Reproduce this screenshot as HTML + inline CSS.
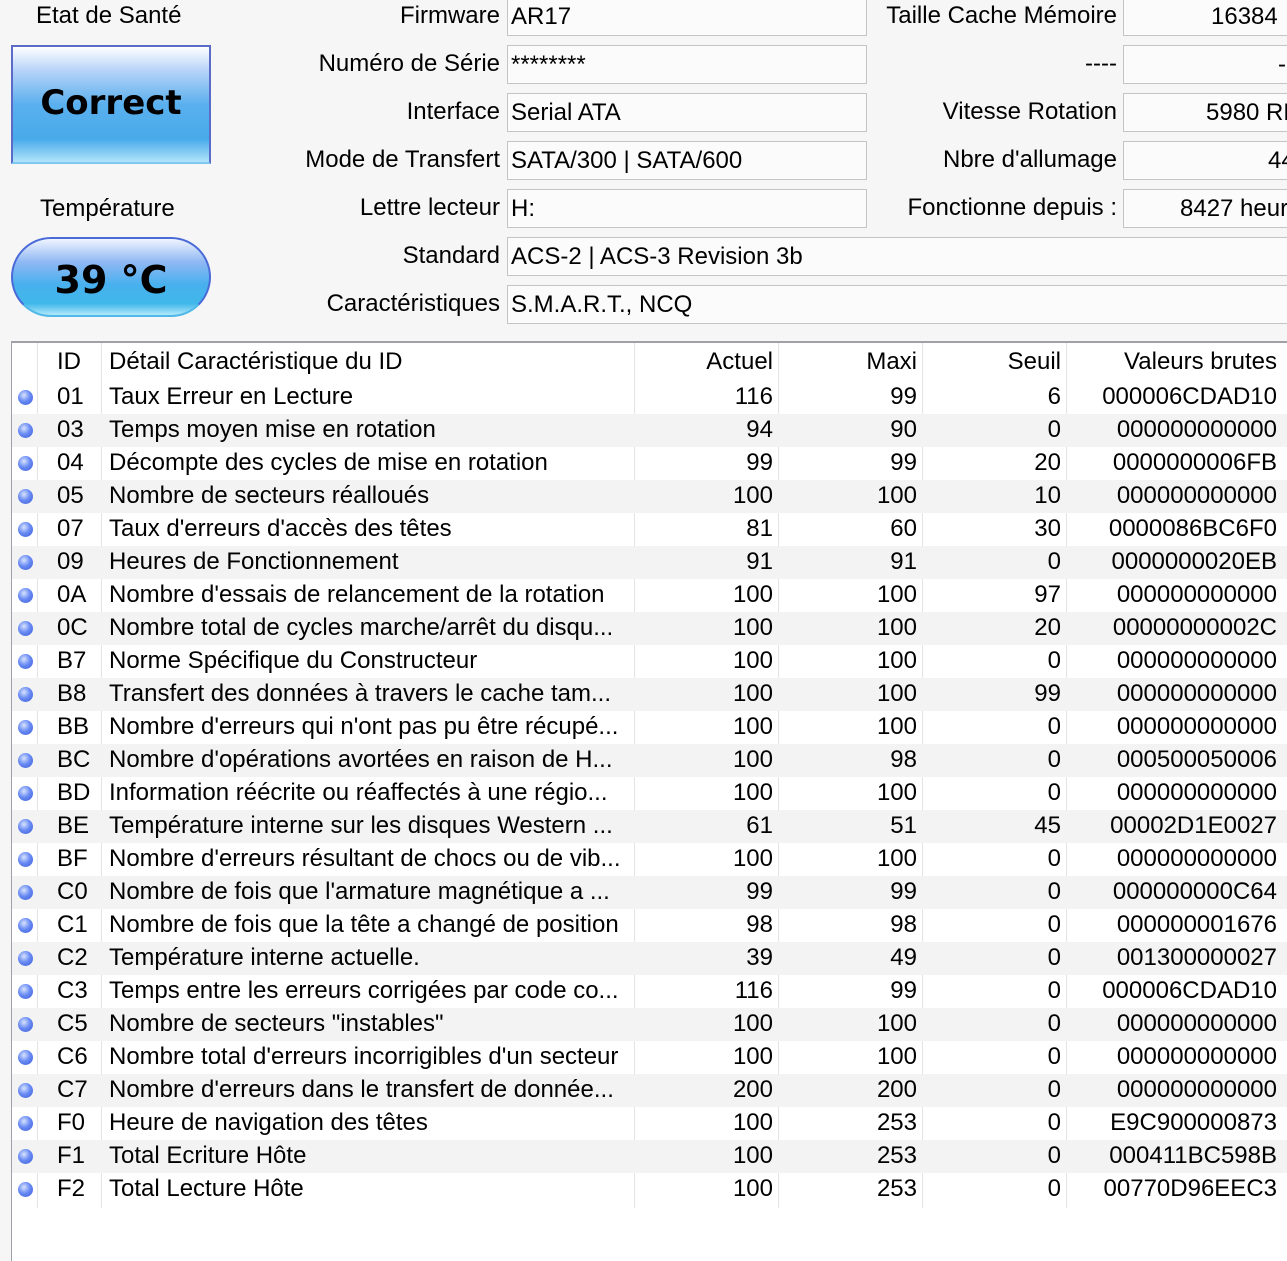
<!DOCTYPE html>
<html><head><meta charset="utf-8"><style>
*{margin:0;padding:0;box-sizing:border-box}
body{width:1287px;height:1250px;overflow:hidden;background:#f6f6f6;font-family:"Liberation Sans","DejaVu Sans",sans-serif;font-size:24px;color:#000;position:relative}
.a{position:absolute;white-space:nowrap;line-height:38px}
.r{text-align:right}
.box{position:absolute;background:#fbfbfb;border:1px solid #c4c4c4;height:39px;line-height:37px;padding-left:3px;white-space:nowrap;overflow:hidden}
#tbl{position:absolute;left:11px;top:341px;width:1290px;height:920px;background:#fff;border-top:2px solid #a0a0a8;border-left:1px solid #a0a0a8}
.row{position:absolute;left:0;width:1290px;height:33px;line-height:32px}
.row.g{background:#f3f3f3}
.c{position:absolute;top:0;white-space:nowrap}
.vl{position:absolute;top:0;width:1px;height:865px;background:#e4e4e4}
.dot{position:absolute;left:6px;top:9px;width:15px;height:15px;border-radius:50%;background:radial-gradient(circle at 40% 35%,#d8e4ff 0,#6a8cf4 45%,#3a5ad8 100%)}
</style></head><body>
<div class="a" style="left:36px;top:-3px">Etat de Santé</div>
<div style="position:absolute;left:11px;top:45px;width:200px;height:119px;border:2px solid #5a6cc8;border-bottom-color:#7ec8f0;background:linear-gradient(#ffffff 0%,#b8d4f8 20%,#5ab0ee 50%,#48aaea 80%,#b0e4fa 100%);text-align:center;line-height:112px;font-weight:bold;font-size:34px;font-family:'DejaVu Sans',sans-serif">Correct</div>
<div class="a" style="left:40px;top:190px">Température</div>
<div style="position:absolute;left:11px;top:237px;width:200px;height:80px;border-radius:40px;border:2px solid #4a6ad8;border-bottom-color:#50b8e8;background:linear-gradient(#f0f4ff 0%,#90b8f4 30%,#48b0ee 60%,#40b8ea 85%,#b0e8fa 100%);text-align:center;line-height:82px;font-weight:bold;font-size:38px;font-family:'DejaVu Sans',sans-serif">39 °C</div>

<div class="a r" style="right:787px;top:-3px">Firmware</div>
<div class="a r" style="right:787px;top:45px">Numéro de Série</div>
<div class="a r" style="right:787px;top:93px">Interface</div>
<div class="a r" style="right:787px;top:141px">Mode de Transfert</div>
<div class="a r" style="right:787px;top:189px">Lettre lecteur</div>
<div class="a r" style="right:787px;top:237px">Standard</div>
<div class="a r" style="right:787px;top:285px">Caractéristiques</div>

<div class="box" style="left:507px;top:-3px;width:360px">AR17</div>
<div class="box" style="left:507px;top:45px;width:360px">********</div>
<div class="box" style="left:507px;top:93px;width:360px">Serial ATA</div>
<div class="box" style="left:507px;top:141px;width:360px">SATA/300 | SATA/600</div>
<div class="box" style="left:507px;top:189px;width:360px">H:</div>
<div class="box" style="left:507px;top:237px;width:800px">ACS-2 | ACS-3 Revision 3b</div>
<div class="box" style="left:507px;top:285px;width:800px">S.M.A.R.T., NCQ</div>

<div class="a r" style="right:170px;top:-3px">Taille Cache Mémoire</div>
<div class="a r" style="right:170px;top:45px">----</div>
<div class="a r" style="right:170px;top:93px">Vitesse Rotation</div>
<div class="a r" style="right:170px;top:141px">Nbre d'allumage</div>
<div class="a r" style="right:170px;top:189px">Fonctionne depuis :</div>
<div class="box" style="left:1123px;top:-3px;width:200px"><span style="position:absolute;left:87px">16384</span></div>
<div class="box" style="left:1123px;top:45px;width:200px"><span style="position:absolute;left:154px">----</span></div>
<div class="box" style="left:1123px;top:93px;width:200px"><span style="position:absolute;left:82px">5980 RPM</span></div>
<div class="box" style="left:1123px;top:141px;width:200px"><span style="position:absolute;left:144px">4432</span></div>
<div class="box" style="left:1123px;top:189px;width:200px"><span style="position:absolute;left:56px">8427 heures</span></div>

<div id="tbl">
<div class="vl" style="left:25px"></div><div class="vl" style="left:89px"></div><div class="vl" style="left:622px"></div><div class="vl" style="left:766px"></div><div class="vl" style="left:910px"></div><div class="vl" style="left:1054px"></div>
<div class="row" style="top:3px"><span class="c" style="left:45px">ID</span><span class="c" style="left:97px">Détail Caractéristique du ID</span><span class="c r" style="right:529px">Actuel</span><span class="c r" style="right:385px">Maxi</span><span class="c r" style="right:241px">Seuil</span><span class="c r" style="right:25px">Valeurs brutes</span></div>
<div id="rows"></div>
</div>
<script>
var d=[["01","Taux Erreur en Lecture","116","99","6","000006CDAD10"],
["03","Temps moyen mise en rotation","94","90","0","000000000000"],
["04","Décompte des cycles de mise en rotation","99","99","20","0000000006FB"],
["05","Nombre de secteurs réalloués","100","100","10","000000000000"],
["07","Taux d'erreurs d'accès des têtes","81","60","30","0000086BC6F0"],
["09","Heures de Fonctionnement","91","91","0","0000000020EB"],
["0A","Nombre d'essais de relancement de la rotation","100","100","97","000000000000"],
["0C","Nombre total de cycles marche/arrêt du disqu...","100","100","20","00000000002C"],
["B7","Norme Spécifique du Constructeur","100","100","0","000000000000"],
["B8","Transfert des données à travers le cache tam...","100","100","99","000000000000"],
["BB","Nombre d'erreurs qui n'ont pas pu être récupé...","100","100","0","000000000000"],
["BC","Nombre d'opérations avortées en raison de H...","100","98","0","000500050006"],
["BD","Information réécrite ou réaffectés à une régio...","100","100","0","000000000000"],
["BE","Température interne sur les disques Western ...","61","51","45","00002D1E0027"],
["BF","Nombre d'erreurs résultant de chocs ou de vib...","100","100","0","000000000000"],
["C0","Nombre de fois que l'armature magnétique a ...","99","99","0","000000000C64"],
["C1","Nombre de fois que la tête a changé de position","98","98","0","000000001676"],
["C2","Température interne actuelle.","39","49","0","001300000027"],
["C3","Temps entre les erreurs corrigées par code co...","116","99","0","000006CDAD10"],
["C5","Nombre de secteurs \"instables\"","100","100","0","000000000000"],
["C6","Nombre total d'erreurs incorrigibles d'un secteur","100","100","0","000000000000"],
["C7","Nombre d'erreurs dans le transfert de donnée...","200","200","0","000000000000"],
["F0","Heure de navigation des têtes","100","253","0","E9C900000873"],
["F1","Total Ecriture Hôte","100","253","0","000411BC598B"],
["F2","Total Lecture Hôte","100","253","0","00770D96EEC3"]];
var h="";d.forEach(function(r,i){h+='<div class="row'+(i%2?' g':'')+'" style="top:'+(38+i*33)+'px"><span class="dot"></span><span class="c" style="left:45px">'+r[0]+'</span><span class="c" style="left:97px">'+r[1].replace(/"/g,'&quot;')+'</span><span class="c r" style="right:529px">'+r[2]+'</span><span class="c r" style="right:385px">'+r[3]+'</span><span class="c r" style="right:241px">'+r[4]+'</span><span class="c r" style="right:25px">'+r[5]+'</span></div>';});
document.getElementById("rows").outerHTML=h;
</script>
</body></html>
